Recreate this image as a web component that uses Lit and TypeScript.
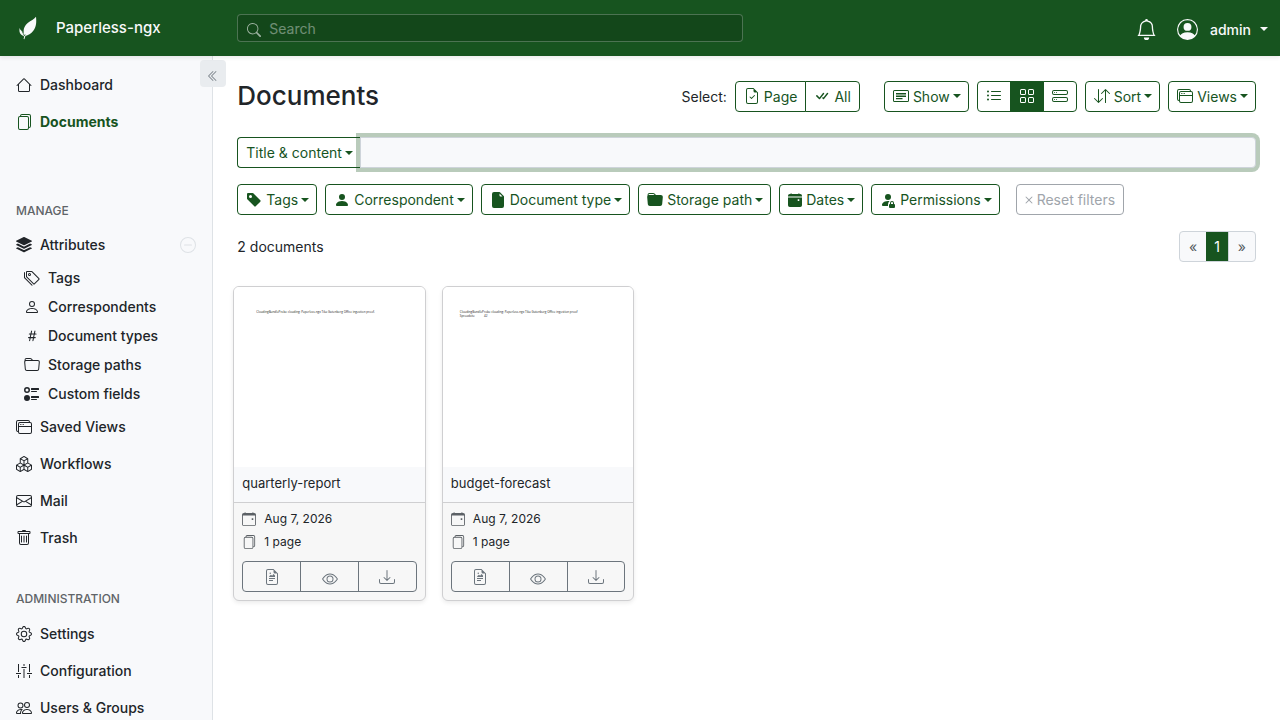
import { LitElement, html, css, svg, nothing } from "lit";
import { customElement, property } from "lit/decorators.js";

const ICONS: Record<string, string[]> = {
  house: ["M8.707 1.500a1 1 0 0 0-1.414 0L.646 8.146a.5.5 0 0 0 .708.708L2 8.207V13.500A1.500 1.500 0 0 0 3.500 15h9a1.500 1.500 0 0 0 1.500-1.500V8.207l.646.647a.5.5 0 0 0 .708-.708zM13 7.207V13.500a.5.5 0 0 1-.5.5h-9a.5.5 0 0 1-.5-.5V7.207l5-5z"],
  files: ["M13 0H6a2 2 0 0 0-2 2 2 2 0 0 0-2 2v10a2 2 0 0 0 2 2h7a2 2 0 0 0 2-2 2 2 0 0 0 2-2V2a2 2 0 0 0-2-2m0 13V4a2 2 0 0 0-2-2H5a1 1 0 0 1 1-1h7a1 1 0 0 1 1 1v10a1 1 0 0 1-1 1M3 4a1 1 0 0 1 1-1h7a1 1 0 0 1 1 1v10a1 1 0 0 1-1 1H4a1 1 0 0 1-1-1z"],
  stack: ["m14.12 10.163 1.715.858c.22.11.22.424 0 .534L8.267 15.34a.6.6 0 0 1-.534 0L.165 11.555a.299.299 0 0 1 0-.534l1.716-.858 5.317 2.659c.505.252 1.1.252 1.604 0l5.317-2.66zM7.733.063a.6.6 0 0 1 .534 0l7.568 3.784a.3.3 0 0 1 0 .535L8.267 8.165a.6.6 0 0 1-.534 0L.165 4.382a.299.299 0 0 1 0-.535z", "m14.12 6.576 1.715.858c.22.11.22.424 0 .534l-7.568 3.784a.6.6 0 0 1-.534 0L.165 7.968a.299.299 0 0 1 0-.534l1.716-.858 5.317 2.659c.505.252 1.1.252 1.604 0z"],
  tags: ["M3 2v4.586l7 7L14.586 9l-7-7zM2 2a1 1 0 0 1 1-1h4.586a1 1 0 0 1 .707.293l7 7a1 1 0 0 1 0 1.414l-4.586 4.586a1 1 0 0 1-1.414 0l-7-7A1 1 0 0 1 2 6.586z", "M5.5 5a.5.5 0 1 1 0-1 .5.5 0 0 1 0 1m0 1a1.5 1.5 0 1 0 0-3 1.5 1.5 0 0 0 0 3M1 7.086a1 1 0 0 0 .293.707L8.75 15.25l-.043.043a1 1 0 0 1-1.414 0l-7-7A1 1 0 0 1 0 7.586V3a1 1 0 0 1 1-1z"],
  person: ["M8 8a3 3 0 1 0 0-6 3 3 0 0 0 0 6m2-3a2 2 0 1 1-4 0 2 2 0 0 1 4 0m4 8c0 1-1 1-1 1H3s-1 0-1-1 1-4 6-4 6 3 6 4m-1-.004c-.001-.246-.154-.986-.832-1.664C11.516 10.68 10.289 10 8 10s-3.516.68-4.168 1.332c-.678.678-.83 1.418-.832 1.664z"],
  hash: ["M8.39 12.648a1 1 0 0 0-.015.18c0 .305.21.508.5.508.266 0 .492-.172.555-.477l.554-2.703h1.204c.421 0 .617-.234.617-.547 0-.312-.188-.53-.617-.53h-.985l.516-2.524h1.265c.43 0 .618-.227.618-.547 0-.313-.188-.524-.618-.524h-1.046l.476-2.304a1 1 0 0 0 .016-.164.51.51 0 0 0-.516-.516.54.54 0 0 0-.539.43l-.523 2.554H7.617l.477-2.304c.008-.04.015-.118.015-.164a.51.51 0 0 0-.523-.516.54.54 0 0 0-.531.43L6.53 5.484H5.414c-.43 0-.617.22-.617.532s.187.539.617.539h.906l-.515 2.523H4.609c-.421 0-.609.219-.609.531s.188.547.61.547h.976l-.516 2.492c-.008.04-.015.125-.015.18 0 .305.21.508.5.508.265 0 .492-.172.554-.477l.555-2.703h2.242zm-1-6.109h2.266l-.515 2.563H6.859l.532-2.563z"],
  folder: ["M.54 3.87.5 3a2 2 0 0 1 2-2h3.672a2 2 0 0 1 1.414.586l.828.828A2 2 0 0 0 9.828 3h3.982a2 2 0 0 1 1.992 2.181l-.637 7A2 2 0 0 1 13.174 14H2.826a2 2 0 0 1-1.991-1.819l-.637-7a2 2 0 0 1 .342-1.31zM2.19 4a1 1 0 0 0-.996 1.09l.637 7a1 1 0 0 0 .995.91h10.348a1 1 0 0 0 .995-.91l.637-7A1 1 0 0 0 13.81 4zm4.69-1.707A1 1 0 0 0 6.172 2H2.5a1 1 0 0 0-1 .981l.006.139q.323-.119.684-.12h5.396z"],
  radios: ["M7 2.5a.5.5 0 0 1 .5-.5h7a.5.5 0 0 1 .5.5v1a.5.5 0 0 1-.5.5h-7a.5.5 0 0 1-.5-.5zM0 12a3 3 0 1 1 6 0 3 3 0 0 1-6 0m7-1.5a.5.5 0 0 1 .5-.5h7a.5.5 0 0 1 .5.5v1a.5.5 0 0 1-.5.5h-7a.5.5 0 0 1-.5-.5zm0-5a.5.5 0 0 1 .5-.5h5a.5.5 0 0 1 0 1h-5a.5.5 0 0 1-.5-.5m0 8a.5.5 0 0 1 .5-.5h5a.5.5 0 0 1 0 1h-5a.5.5 0 0 1-.5-.5M3 1a3 3 0 1 0 0 6 3 3 0 0 0 0-6m0 4.5a1.5 1.5 0 1 1 0-3 1.5 1.5 0 0 1 0 3"],
  windowStack: ["M4.5 6a.5.5 0 1 0 0-1 .5.5 0 0 0 0 1M6 6a.5.5 0 1 0 0-1 .5.5 0 0 0 0 1m2-.5a.5.5 0 1 1-1 0 .5.5 0 0 1 1 0", "M12 1a2 2 0 0 1 2 2 2 2 0 0 1 2 2v8a2 2 0 0 1-2 2H4a2 2 0 0 1-2-2 2 2 0 0 1-2-2V3a2 2 0 0 1 2-2zM2 12V5a2 2 0 0 1 2-2h9a1 1 0 0 0-1-1H2a1 1 0 0 0-1 1v8a1 1 0 0 0 1 1m1-4v5a1 1 0 0 0 1 1h10a1 1 0 0 0 1-1V8zm12-1V5a1 1 0 0 0-1-1H4a1 1 0 0 0-1 1v2z"],
  boxes: ["M7.752.066a.5.5 0 0 1 .496 0l3.75 2.143a.5.5 0 0 1 .252.434v3.995l3.498 2A.5.5 0 0 1 16 9.07v4.286a.5.5 0 0 1-.252.434l-3.75 2.143a.5.5 0 0 1-.496 0l-3.502-2-3.502 2.001a.5.5 0 0 1-.496 0l-3.75-2.143A.5.5 0 0 1 0 13.357V9.071a.5.5 0 0 1 .252-.434L3.75 6.638V2.643a.5.5 0 0 1 .252-.434zM4.25 7.504 1.508 9.071l2.742 1.567 2.742-1.567zM7.5 9.933l-2.75 1.571v3.134l2.75-1.571zm1 3.134 2.75 1.571v-3.134L8.5 9.933zm.508-3.996 2.742 1.567 2.742-1.567-2.742-1.567zm2.242-2.433V3.504L8.5 5.076V8.21zM7.5 8.21V5.076L4.75 3.504v3.134zM5.258 2.643 8 4.21l2.742-1.567L8 1.076zM15 9.933l-2.75 1.571v3.134L15 13.067zM3.75 14.638v-3.134L1 9.933v3.134z"],
  envelope: ["M0 4a2 2 0 0 1 2-2h12a2 2 0 0 1 2 2v8a2 2 0 0 1-2 2H2a2 2 0 0 1-2-2zm2-1a1 1 0 0 0-1 1v.217l7 4.2 7-4.2V4a1 1 0 0 0-1-1zm13 2.383-4.708 2.825L15 11.105zm-.034 6.876-5.64-3.471L8 9.583l-1.326-.795-5.64 3.47A1 1 0 0 0 2 13h12a1 1 0 0 0 .966-.741M1 11.105l4.708-2.897L1 5.383z"],
  trash: ["M5.5 5.5A.5.5 0 0 1 6 6v6a.5.5 0 0 1-1 0V6a.5.5 0 0 1 .5-.5m2.5 0a.5.5 0 0 1 .5.5v6a.5.5 0 0 1-1 0V6a.5.5 0 0 1 .5-.5m3 .5a.5.5 0 0 0-1 0v6a.5.5 0 0 0 1 0z", "M14.5 3a1 1 0 0 1-1 1H13v9a2 2 0 0 1-2 2H5a2 2 0 0 1-2-2V4h-.5a1 1 0 0 1-1-1V2a1 1 0 0 1 1-1H6a1 1 0 0 1 1-1h2a1 1 0 0 1 1 1h3.500a1 1 0 0 1 1 1zM4.118 4 4 4.059V13a1 1 0 0 0 1 1h6a1 1 0 0 0 1-1V4.059L11.882 4zM2.500 3h11V2h-11z"],
  gear: ["M8 4.754a3.246 3.246 0 1 0 0 6.492 3.246 3.246 0 0 0 0-6.492M5.754 8a2.246 2.246 0 1 1 4.492 0 2.246 2.246 0 0 1-4.492 0", "M9.796 1.343c-.527-1.79-3.065-1.79-3.592 0l-.094.319a.873.873 0 0 1-1.255.52l-.292-.16c-1.640-.892-3.433.902-2.540 2.541l.159.292a.873.873 0 0 1-.52 1.255l-.319.094c-1.790.527-1.790 3.065 0 3.592l.319.094a.873.873 0 0 1 .52 1.255l-.16.292c-.892 1.640.901 3.434 2.541 2.540l.292-.159a.873.873 0 0 1 1.255.52l.094.319c.527 1.790 3.065 1.790 3.592 0l.094-.319a.873.873 0 0 1 1.255-.52l.292.16c1.640.893 3.434-.902 2.540-2.541l-.159-.292a.873.873 0 0 1 .52-1.255l.319-.094c1.790-.527 1.790-3.065 0-3.592l-.319-.094a.873.873 0 0 1-.52-1.255l.16-.292c.893-1.640-.902-3.433-2.541-2.540l-.292.159a.873.873 0 0 1-1.255-.52zm-2.633.283c.246-.835 1.428-.835 1.674 0l.094.319a1.873 1.873 0 0 0 2.693 1.115l.291-.16c.764-.415 1.600.42 1.184 1.185l-.159.292a1.873 1.873 0 0 0 1.116 2.692l.318.094c.835.246.835 1.428 0 1.674l-.319.094a1.873 1.873 0 0 0-1.115 2.693l.16.291c.415.764-.42 1.600-1.185 1.184l-.291-.159a1.873 1.873 0 0 0-2.693 1.116l-.094.318c-.246.835-1.428.835-1.674 0l-.094-.319a1.873 1.873 0 0 0-2.692-1.115l-.292.16c-.764.415-1.600-.42-1.184-1.185l.159-.291A1.873 1.873 0 0 0 1.945 8.930l-.319-.094c-.835-.246-.835-1.428 0-1.674l.319-.094A1.873 1.873 0 0 0 3.060 4.377l-.16-.292c-.415-.764.42-1.600 1.185-1.184l.292.159a1.873 1.873 0 0 0 2.692-1.115z"],
  people: ["M15 14s1 0 1-1-1-4-5-4-5 3-5 4 1 1 1 1zm-7.978-1L7 12.996c.001-.264.167-1.030.76-1.720C8.312 10.629 9.282 10 11 10c1.717 0 2.687.63 3.240 1.276.593.69.758 1.457.76 1.720l-.008.002-.014.002zM11 7a2 2 0 1 0 0-4 2 2 0 0 0 0 4m3-2a3 3 0 1 1-6 0 3 3 0 0 1 6 0M6.936 9.280a6 6 0 0 0-1.230-.247A7 7 0 0 0 5 9c-4 0-5 3-5 4q0 1 1 1h4.216A2.240 2.240 0 0 1 5 13c0-1.010.377-2.042 1.090-2.904.243-.294.526-.569.846-.816M4.920 10A5.500 5.500 0 0 0 4 13H1c0-.26.164-1.030.76-1.724.545-.636 1.492-1.256 3.160-1.275ZM1.500 5.500a3 3 0 1 1 6 0 3 3 0 0 1-6 0m3-2a2 2 0 1 0 0 4 2 2 0 0 0 0-4"],
  search: ["M11.742 10.344a6.5 6.5 0 1 0-1.397 1.398h-.001q.044.06.098.115l3.850 3.850a1 1 0 0 0 1.415-1.414l-3.850-3.850a1 1 0 0 0-.115-.1zM12 6.500a5.500 5.500 0 1 1-11 0 5.500 5.500 0 0 1 11 0"],
  bell: ["M8 16a2 2 0 0 0 2-2H6a2 2 0 0 0 2 2M8 1.918l-.797.161A4 4 0 0 0 4 6c0 .628-.134 2.197-.459 3.742-.16.767-.376 1.566-.663 2.258h10.244c-.287-.692-.502-1.490-.663-2.258C12.134 8.197 12 6.628 12 6a4 4 0 0 0-3.203-3.920zM14.220 12c.223.447.481.801.78 1H1c.299-.199.557-.553.78-1C2.680 10.200 3 6.880 3 6c0-2.420 1.720-4.440 4.005-4.901a1 1 0 1 1 1.990 0A5 5 0 0 1 13 6c0 .88.32 4.200 1.220 6"],
  personCircle: ["M11 6a3 3 0 1 1-6 0 3 3 0 0 1 6 0", "M0 8a8 8 0 1 1 16 0A8 8 0 0 1 0 8m8-7a7 7 0 0 0-5.468 11.370C3.242 11.226 4.805 10 8 10s4.757 1.225 5.468 2.370A7 7 0 0 0 8 1"],
  chevrons: ["M8.354 1.646a.5.5 0 0 1 0 .708L2.707 8l5.647 5.646a.5.5 0 0 1-.708.708l-6-6a.5.5 0 0 1 0-.708l6-6a.5.5 0 0 1 .708 0", "M12.354 1.646a.5.5 0 0 1 0 .708L6.707 8l5.647 5.646a.5.5 0 0 1-.708.708l-6-6a.5.5 0 0 1 0-.708l6-6a.5.5 0 0 1 .708 0"],
  minusCircle: ["M8 15A7 7 0 1 1 8 1a7 7 0 0 1 0 14m0 1A8 8 0 1 0 8 0a8 8 0 0 0 0 16", "M4 8a.5.5 0 0 1 .5-.5h7a.5.5 0 0 1 0 1h-7A.5.5 0 0 1 4 8"],
  fileCheck: ["M10.854 7.854a.5.5 0 0 0-.708-.708L7.500 9.793 6.354 8.646a.5.5 0 1 0-.708.708l1.500 1.500a.5.5 0 0 0 .708 0z", "M14 14V4.500L9.500 0H4a2 2 0 0 0-2 2v12a2 2 0 0 0 2 2h8a2 2 0 0 0 2-2M9.500 3A1.500 1.500 0 0 0 11 4.500h2V14a1 1 0 0 1-1 1H4a1 1 0 0 1-1-1V2a1 1 0 0 1 1-1h5.500z"],
  checkAll: ["M8.970 4.970a.75.75 0 0 1 1.070 1.050l-3.990 4.990a.75.75 0 0 1-1.080.020L2.324 8.384a.75.75 0 1 1 1.060-1.060l2.094 2.093L8.950 4.992zm-.920 5.140.920.920a.75.75 0 0 0 1.079-.020l3.992-4.990a.75.75 0 1 0-1.091-1.028L9.477 9.417l-.485-.486z"],
  cardText: ["M14.500 3a.5.5 0 0 1 .5.5v9a.5.5 0 0 1-.5.5h-13a.5.5 0 0 1-.5-.5v-9a.5.5 0 0 1 .5-.5zm-13-1A1.500 1.500 0 0 0 0 3.500v9A1.500 1.500 0 0 0 1.500 14h13a1.500 1.500 0 0 0 1.500-1.500v-9A1.500 1.500 0 0 0 14.500 2z", "M3 5h10v1.500H3zM3 7.500h10V9H3zM3 10h6.500v1.200H3z"],
  list: ["M5 11.500a.5.5 0 0 1 .5-.5h9a.5.5 0 0 1 0 1h-9a.5.5 0 0 1-.5-.5m0-4a.5.5 0 0 1 .5-.5h9a.5.5 0 0 1 0 1h-9a.5.5 0 0 1-.5-.5m0-4a.5.5 0 0 1 .5-.5h9a.5.5 0 0 1 0 1h-9a.5.5 0 0 1-.5-.5m-3 1a1 1 0 1 0 0-2 1 1 0 0 0 0 2m0 4a1 1 0 1 0 0-2 1 1 0 0 0 0 2m0 4a1 1 0 1 0 0-2 1 1 0 0 0 0 2"],
  grid: ["M1 2.500A1.500 1.500 0 0 1 2.500 1h3A1.500 1.500 0 0 1 7 2.500v3A1.500 1.500 0 0 1 5.500 7h-3A1.500 1.500 0 0 1 1 5.500zM2.500 2a.5.5 0 0 0-.5.5v3a.5.5 0 0 0 .5.5h3a.5.5 0 0 0 .5-.5v-3a.5.5 0 0 0-.5-.5zm6.500.5A1.500 1.500 0 0 1 10.500 1h3A1.500 1.500 0 0 1 15 2.500v3A1.500 1.500 0 0 1 13.500 7h-3A1.500 1.500 0 0 1 9 5.500zm1.500-.5a.5.5 0 0 0-.5.5v3a.5.5 0 0 0 .5.5h3a.5.5 0 0 0 .5-.5v-3a.5.5 0 0 0-.5-.5zM1 10.500A1.500 1.500 0 0 1 2.500 9h3A1.500 1.500 0 0 1 7 10.500v3A1.500 1.500 0 0 1 5.500 15h-3A1.500 1.500 0 0 1 1 13.500zm1.500-.5a.5.5 0 0 0-.5.5v3a.5.5 0 0 0 .5.5h3a.5.5 0 0 0 .5-.5v-3a.5.5 0 0 0-.5-.5zm6.500.5A1.500 1.500 0 0 1 10.500 9h3a1.500 1.500 0 0 1 1.500 1.500v3a1.500 1.500 0 0 1-1.500 1.500h-3A1.500 1.500 0 0 1 9 13.500zm1.500-.5a.5.5 0 0 0-.5.5v3a.5.5 0 0 0 .5.5h3a.5.5 0 0 0 .5-.5v-3a.5.5 0 0 0-.5-.5z"],
  hdd: ["M14 10a1 1 0 0 1 1 1v1a1 1 0 0 1-1 1H2a1 1 0 0 1-1-1v-1a1 1 0 0 1 1-1zM2 9a2 2 0 0 0-2 2v1a2 2 0 0 0 2 2h12a2 2 0 0 0 2-2v-1a2 2 0 0 0-2-2z", "M5 11.500a.5.5 0 1 1-1 0 .5.5 0 0 1 1 0m-2 0a.5.5 0 1 1-1 0 .5.5 0 0 1 1 0M14 3a1 1 0 0 1 1 1v1a1 1 0 0 1-1 1H2a1 1 0 0 1-1-1V4a1 1 0 0 1 1-1zM2 2a2 2 0 0 0-2 2v1a2 2 0 0 0 2 2h12a2 2 0 0 0 2-2V4a2 2 0 0 0-2-2z", "M5 4.500a.5.5 0 1 1-1 0 .5.5 0 0 1 1 0m-2 0a.5.5 0 1 1-1 0 .5.5 0 0 1 1 0"],
  arrows: ["M11.500 15a.5.5 0 0 0 .5-.5V2.707l3.146 3.147a.5.5 0 0 0 .708-.708l-4-4a.5.5 0 0 0-.708 0l-4 4a.5.5 0 1 0 .708.708L11 2.707V14.500a.5.5 0 0 0 .5.5m-7-14a.5.5 0 0 1 .5.5v11.793l3.146-3.147a.5.5 0 0 1 .708.708l-4 4a.5.5 0 0 1-.708 0l-4-4a.5.5 0 0 1 .708-.708L4 13.293V1.500a.5.5 0 0 1 .5-.5"],
  tagFill: ["M2 1a1 1 0 0 0-1 1v4.586a1 1 0 0 0 .293.707l7 7a1 1 0 0 0 1.414 0l4.586-4.586a1 1 0 0 0 0-1.414l-7-7A1 1 0 0 0 6.586 1zm4 3.500a1.500 1.500 0 1 1-3 0 1.500 1.500 0 0 1 3 0"],
  personFill: ["M3 14s-1 0-1-1 1-4 6-4 6 3 6 4-1 1-1 1zm5-6a3 3 0 1 0 0-6 3 3 0 0 0 0 6"],
  fileFill: ["M4 0h5.293A1 1 0 0 1 10 .293L13.707 4a1 1 0 0 1 .293.707V14a2 2 0 0 1-2 2H4a2 2 0 0 1-2-2V2a2 2 0 0 1 2-2m5.500 1.500v2a1 1 0 0 0 1 1h2z"],
  folderFill: ["M9.828 3h3.982a2 2 0 0 1 1.992 2.181l-.637 7A2 2 0 0 1 13.174 14H2.825a2 2 0 0 1-1.991-1.819l-.637-7a2 2 0 0 1 .342-1.310L.500 3a2 2 0 0 1 2-2h3.672a2 2 0 0 1 1.414.586l.828.828A2 2 0 0 0 9.828 3m-8.322.120q.322-.119.684-.120h5.396l-.707-.707A1 1 0 0 0 6.172 2H2.500a1 1 0 0 0-1 .981z"],
  calendarFill: ["M3.500 0a.5.5 0 0 1 .5.5V1h8V.5a.5.5 0 0 1 1 0V1h1a2 2 0 0 1 2 2v1H0V3a2 2 0 0 1 2-2h1V.5a.5.5 0 0 1 .5-.5", "M0 5h16v9a2 2 0 0 1-2 2H2a2 2 0 0 1-2-2zm12.500 4a.5.5 0 0 0 .5-.5v-1a.5.5 0 0 0-.5-.5h-1a.5.5 0 0 0-.5.5v1a.5.5 0 0 0 .5.5z"],
  calendar: ["M11 7.500a.5.5 0 0 1 .5-.5h1a.5.5 0 0 1 .5.5v1a.5.5 0 0 1-.5.5h-1a.5.5 0 0 1-.5-.5z", "M3.500 0a.5.5 0 0 1 .5.5V1h8V.5a.5.5 0 0 1 1 0V1h1a2 2 0 0 1 2 2v11a2 2 0 0 1-2 2H2a2 2 0 0 1-2-2V3a2 2 0 0 1 2-2h1V.5a.5.5 0 0 1 .5-.5M1 4v10a1 1 0 0 0 1 1h12a1 1 0 0 0 1-1V4z"],
  personLock: ["M11 5a3 3 0 1 1-6 0 3 3 0 0 1 6 0", "M2 13c0 1 1 1 1 1h5v-1a2 2 0 0 1 .010-.200 4.490 4.490 0 0 1 1.534-3.693Q8.844 9.002 8 9c-5 0-6 3-6 4", "M9 13a1 1 0 0 1 1-1v-1a2 2 0 1 1 4 0v1a1 1 0 0 1 1 1v2a1 1 0 0 1-1 1h-4a1 1 0 0 1-1-1zm3-3a1 1 0 0 0-1 1v1h2v-1a1 1 0 0 0-1-1"],
  x: ["M4.646 4.646a.5.5 0 0 1 .708 0L8 7.293l2.646-2.647a.5.5 0 0 1 .708.708L8.707 8l2.647 2.646a.5.5 0 0 1-.708.708L8 8.707l-2.646 2.647a.5.5 0 0 1-.708-.708L7.293 8 4.646 5.354a.5.5 0 0 1 0-.708"],
  fileRich: ["M7 4.250c0 .414-.336.750-.750.750s-.750-.336-.750-.750.336-.750.750-.750.750.336.750.750M5.500 7l1.400-1.300 1.300 1 1.200-1.600L11 6.500V8H5z", "M5 9h6v1H5zM5 11h4v1H5z", "M14 14V4.500L9.500 0H4a2 2 0 0 0-2 2v12a2 2 0 0 0 2 2h8a2 2 0 0 0 2-2M9.500 3A1.500 1.500 0 0 0 11 4.500h2V14a1 1 0 0 1-1 1H4a1 1 0 0 1-1-1V2a1 1 0 0 1 1-1h5.500z"],
  eye: ["M16 8s-3-5.500-8-5.500S0 8 0 8s3 5.500 8 5.500S16 8 16 8M1.173 8a13 13 0 0 1 1.660-2.043C4.120 4.668 5.880 3.500 8 3.500s3.879 1.168 5.168 2.457A13 13 0 0 1 14.828 8q-.086.130-.195.288c-.335.480-.830 1.120-1.465 1.755C11.879 11.332 10.119 12.500 8 12.500s-3.879-1.168-5.168-2.457A13 13 0 0 1 1.172 8z", "M8 5.500a2.500 2.500 0 1 0 0 5 2.500 2.500 0 0 0 0-5M4.500 8a3.500 3.500 0 1 1 7 0 3.500 3.500 0 0 1-7 0"],
  download: ["M.500 9.900a.5.5 0 0 1 .5.5v2.500a1 1 0 0 0 1 1h12a1 1 0 0 0 1-1v-2.500a.5.5 0 0 1 1 0v2.500a2 2 0 0 1-2 2H2a2 2 0 0 1-2-2v-2.500a.5.5 0 0 1 .5-.5", "M7.646 11.854a.5.5 0 0 0 .708 0l3-3a.5.5 0 0 0-.708-.708L8.500 10.293V1.500a.5.5 0 0 0-1 0v8.793L5.354 8.146a.5.5 0 1 0-.708.708z"],
  sliders: ["M2 1h1v8H2zM0 10h5v1H0zM2 12h1v3H2zM7.500 1h1v2h-1zM5.500 4h5v1h-5zM7.500 6h1v9h-1zM13 1h1v8h-1zM11 10h5v1h-5zM13 12h1v3h-1z"],
};

const icon = (name: string, size = 16) => html`<svg class="icon" width=${size} height=${size} viewBox="0 0 16 16" fill="currentColor" aria-hidden="true">${ICONS[name].map((d) => svg`<path fill-rule="evenodd" d=${d}></path>`)}</svg>`;

const shared = css`
  *, *::before, *::after { box-sizing: border-box; }
  .icon { display: block; flex: none; }
  button, input, a { font: inherit; color: inherit; text-decoration: none; }
  button { cursor: pointer; }
  .caret::after {
    content: "";
    border-top: 4px solid;
    border-left: 4px solid transparent;
    border-right: 4px solid transparent;
    margin-left: 3px;
  }
`;

@customElement("app-header")
export class AppHeader extends LitElement {
  static styles = [shared, css`
    :host {
      display: flex;
      align-items: center;
      height: 56px;
      background: #17541f;
      color: #f8f9fa;
      box-shadow: 0 2px 4px rgba(0, 0, 0, 0.08);
      position: relative;
      z-index: 2;
    }
    .brand { display: flex; align-items: center; gap: 18px; width: 16.6667%; padding-left: 18px; font-size: 15px; line-height: 24px; font-weight: 500; }
    .right { flex: 1; display: flex; align-items: center; justify-content: space-between; padding: 0 12px 0 24px; }
    .search { display: flex; align-items: center; gap: 8px; width: 506px; height: 28px; padding: 0 9px; border: 1px solid rgba(248, 249, 250, 0.25); border-radius: 4px; background: rgba(0, 0, 0, 0.15); }
    .search .icon { opacity: 0.6; margin-top: 4px; }
    .search input { flex: 1; min-width: 0; padding: 0; border: 0; outline: 0; background: none; font-size: 14px; line-height: 21px; }
    .search input::placeholder { color: #f8f9fa; opacity: 0.4; }
    .tools { display: flex; align-items: center; gap: 20px; }
    .tools button { display: flex; align-items: center; padding: 2px 0 0; border: 0; background: none; font-size: 14px; line-height: 21px; font-weight: 500; }
    .user .icon { margin-right: 12px; }
    .user.caret::after { margin-left: 9px; }
  `];
  render() {
    return html`
      <a class="brand" href="#">
        <svg width="20" height="24" viewBox="0 0 20 24" fill="currentColor" aria-hidden="true">
          <path d="M18 .8C18.500 6 18.600 10.500 15.300 14.800C13.200 17.600 10 19.300 7.400 20C7 21.300 6.700 22.200 6.400 23.300L5.600 23C5.800 22 6 21.200 6.200 20.400C3 19 .800 17.500 1.600 12C2.300 14.600 4.500 15.200 5.900 17.300C5 12.500 7 9.200 10 6.700C12.800 4.400 16 3.800 18 .8Z"/>
          <path d="M4.200 15.500L6.500 20L7.200 18.500" fill="none" stroke="#17541f" stroke-width=".7"/>
        </svg>
        <span>Paperless-ngx</span>
      </a>
      <div class="right">
        <label class="search">${icon("search", 14)}<input type="text" placeholder="Search" aria-label="Search" /></label>
        <div class="tools">
          <button aria-label="Notifications">${icon("bell", 21)}</button>
          <button class="user caret">${icon("personCircle", 21)}<span>admin</span></button>
        </div>
      </div>`;
  }
}

@customElement("app-sidebar")
export class AppSidebar extends LitElement {
  static styles = [shared, css`
    :host { display: block; position: relative; padding-top: 10px; background: #f8f9fb; border-right: 1px solid #dee2e6; color: #212529; }
    .link { display: flex; align-items: center; gap: 8px; padding: 8px 16px; font-size: 14px; line-height: 21px; font-weight: 500; white-space: nowrap; }
    .link.active { color: #17541f; font-weight: 700; }
    .link.sub { padding: 4px 16px 4px 24px; }
    .label { flex: 1; }
    .minus { color: #dee2e6; }
    h6 { margin: 34px 16px 7px; font-size: 12px; line-height: 18px; font-weight: 500; color: #5f6468; text-transform: uppercase; }
    h6.first { margin-top: 62px; margin-bottom: 6px; }
    .collapse { position: absolute; top: 4px; right: -14px; display: grid; place-items: center; width: 26px; height: 27px; padding: 4px 0 0; border: 0; border-radius: 4px; background: #e9ecef; color: #6c757d; }
  `];
  link(name: string, label: string, cls = "") {
    return html`<a class="link ${cls}" href="#">${icon(name)}<span class="label">${label}</span>${name === "stack" ? html`<span class="minus">${icon("minusCircle")}</span>` : nothing}</a>`;
  }
  render() {
    return html`
      <button class="collapse" aria-label="Collapse sidebar">${icon("chevrons", 12)}</button>
      <nav>
        ${this.link("house", "Dashboard")}
        ${this.link("files", "Documents", "active")}
        <h6 class="first">Manage</h6>
        ${this.link("stack", "Attributes")}
        ${this.link("tags", "Tags", "sub")}
        ${this.link("person", "Correspondents", "sub")}
        ${this.link("hash", "Document types", "sub")}
        ${this.link("folder", "Storage paths", "sub")}
        ${this.link("radios", "Custom fields", "sub")}
        ${this.link("windowStack", "Saved Views")}
        ${this.link("boxes", "Workflows")}
        ${this.link("envelope", "Mail")}
        ${this.link("trash", "Trash")}
        <h6>Administration</h6>
        ${this.link("gear", "Settings")}
        ${this.link("sliders", "Configuration")}
        ${this.link("people", "Users & Groups")}
      </nav>`;
  }
}

@customElement("document-card")
export class DocumentCard extends LitElement {
  @property() name = "";
  @property({ type: Array }) lines: string[] = [];
  @property({ type: Boolean }) sheet = false;
  static styles = [shared, css`
    :host { display: block; border: 1px solid #cfcfd1; border-radius: 6px; background: #f7f7f7; box-shadow: 0 2px 4px rgba(0, 0, 0, 0.08); overflow: hidden; font-size: 12px; line-height: 18px; }
    .thumb { height: 180px; padding: 23px 22px; background: #fff; font: 3px/4px "Open Sans", Arial, sans-serif; color: #222; white-space: pre; }
    .thumb.sheet { padding-left: 17px; }
    .title { padding: 7px 8px 9px; border-bottom: 1px solid #cfcfd1; background: #f8f9fb; font-size: 13px; line-height: 19px; }
    .body { padding: 4px 8px 8px; }
    .meta { display: flex; align-items: center; gap: 8px; height: 23px; }
    .meta .icon { color: #5c6166; }
    .actions { display: flex; margin-top: 8px; border: 1px solid #6c757d; border-radius: 4px; color: #6c757d; }
    .actions button { flex: 1; display: grid; place-items: center; height: 29px; padding: 0; border: 0; background: none; }
    .actions button + button { border-left: 1px solid #6c757d; }
    .actions .low { padding-top: 4px; }
  `];
  render() {
    return html`
      <div class="thumb ${this.sheet ? "sheet" : ""}">${this.lines.map((l) => html`<div>${l}</div>`)}</div>
      <div class="title">${this.name}</div>
      <div class="body">
        <div class="meta">${icon("calendar", 14)}<span>Aug 7, 2026</span></div>
        <div class="meta">${icon("files", 14)}<span>1 page</span></div>
        <div class="actions">
          <button aria-label="Open">${icon("fileRich")}</button>
          <button class="low" aria-label="Preview">${icon("eye")}</button>
          <button aria-label="Download">${icon("download")}</button>
        </div>
      </div>`;
  }
}

@customElement("app-root")
export class AppRoot extends LitElement {
  static styles = [shared, css`
    :host { display: flex; flex-direction: column; height: 100vh; overflow: hidden; font-family: Inter, sans-serif; font-size: 14px; line-height: 21px; color: #212529; background: #fff; }
    .page { flex: 1; display: flex; min-height: 0; }
    app-sidebar { flex: none; width: 16.6667%; }
    main { flex: 1; min-width: 0; padding: 23px 24px; }
    .row { display: flex; align-items: center; gap: 8px; }
    .head { justify-content: space-between; }
    h3 { margin: 0; font-size: 26px; line-height: 34px; font-weight: 500; }
    .btn { display: inline-flex; align-items: center; justify-content: center; height: 31px; padding: 0 8px; border: 1px solid #17541f; border-radius: 4px; background: #fff; color: #17541f; white-space: nowrap; }
    .btn.caret { padding-right: 7px; }
    .btn .icon { margin-right: 4px; }
    .btn.view .icon { margin-right: 0; }
    .group { display: flex; }
    .group .btn + .btn { margin-left: -1px; }
    .group .btn:not(:last-child) { border-top-right-radius: 0; border-bottom-right-radius: 0; }
    .group .btn:not(:first-child) { border-top-left-radius: 0; border-bottom-left-radius: 0; }
    .space { margin-right: 16px; }
    .view { width: 34px; }
    .on { background: #17541f; color: #fff; }
    .query { display: flex; margin-top: 24px; }
    .query .btn { border-radius: 4px 0 0 4px; border-right: 0; }
    .query input { flex: 1; min-width: 0; height: 31px; padding: 0 8px; border: 1px solid #ced4da; border-radius: 0 4px 4px 0; outline: 0; background: #f8f9fb; box-shadow: 0 0 0 4px rgba(23, 84, 31, 0.3); }
    .filters { margin-top: 16px; }
    .btn.reset { margin-left: 8px; padding-left: 4px; border-color: #a0a5ab; color: #a0a5ab; }
    .btn.reset .icon { margin: 0; }
    .count { justify-content: space-between; margin-top: 16px; }
    .pager { display: flex; height: 31px; border: 1px solid #ced4da; border-radius: 4px; background: #f8f9fb; overflow: hidden; color: #54595e; }
    .pager a { display: grid; place-items: center; padding: 0 9px; }
    .pager a:last-child { border-left: 1px solid #ced4da; }
    .pager .on { padding: 0 8px; color: #fff; }
    .cards { display: grid; grid-template-columns: repeat(5, 1fr); gap: 16px; margin: 24px -4px 0; }
  `];
  render() {
    const filter = (name: string, label: string, size = 16) => html`<button class="btn caret">${icon(name, size)}${label}</button>`;
    return html`
      <app-header></app-header>
      <div class="page">
        <app-sidebar></app-sidebar>
        <main>
          <div class="row head">
            <h3>Documents</h3>
            <div class="row">
              <span>Select:</span>
              <div class="group space">
                <button class="btn">${icon("fileCheck")}Page</button>
                <button class="btn">${icon("checkAll")}All</button>
              </div>
              <button class="btn caret">${icon("cardText")}Show</button>
              <div class="group">
                <button class="btn view" aria-label="List">${icon("list")}</button>
                <button class="btn view on" aria-label="Small cards">${icon("grid")}</button>
                <button class="btn view" aria-label="Large cards">${icon("hdd")}</button>
              </div>
              <button class="btn caret">${icon("arrows")}Sort</button>
              <button class="btn caret">${icon("windowStack")}Views</button>
            </div>
          </div>
          <div class="query">
            <button class="btn caret">Title &amp; content</button>
            <input type="text" aria-label="Title and content" />
          </div>
          <div class="row filters">
            ${filter("tagFill", "Tags")}
            ${filter("personFill", "Correspondent")}
            ${filter("fileFill", "Document type")}
            ${filter("folderFill", "Storage path")}
            ${filter("calendarFill", "Dates", 14)}
            ${filter("personLock", "Permissions")}
            <button class="btn reset" disabled>${icon("x")}Reset filters</button>
          </div>
          <div class="row count">
            <span>2 documents</span>
            <nav class="pager" aria-label="Pages"><a href="#">«</a><a class="on" href="#">1</a><a href="#">»</a></nav>
          </div>
          <div class="cards">
            <document-card name="quarterly-report" .lines=${["CloudingBundleProbe clouding: Paperless-ngx Tika Gutenberg Office ingestion proof."]}></document-card>
            <document-card name="budget-forecast" sheet .lines=${["CloudingBundleProbe clouding: Paperless-ngx Tika Gutenberg Office ingestion proof", "Spreadsite            42"]}></document-card>
          </div>
        </main>
      </div>`;
  }
}
